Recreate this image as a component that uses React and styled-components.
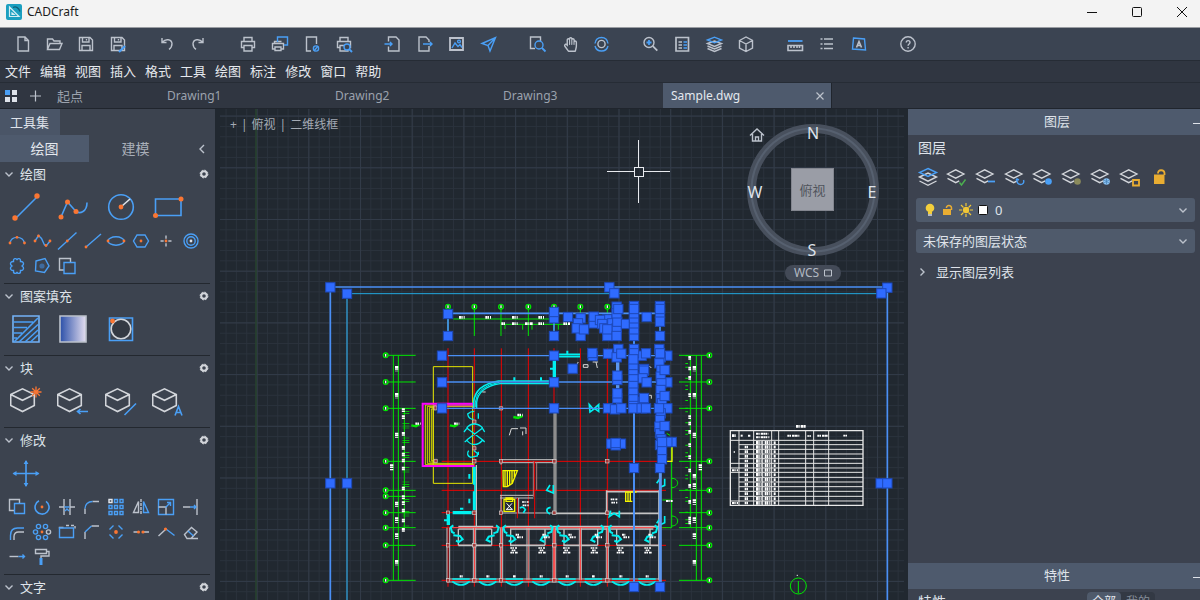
import styled, { createGlobalStyle } from "styled-components";
import { FaRegHandPaper } from "react-icons/fa";

const GlobalStyle = createGlobalStyle`
  * {
    box-sizing: border-box;
  }
  body {
    margin: 0;
    overflow: hidden;
    font-family: "Noto Sans", "Noto Sans CJK SC", sans-serif;
    font-size: 13px;
    line-height: 20px;
    color: #dfe3ea;
    background: #212830;
  }
  button,
  select {
    font: inherit;
    color: inherit;
    border: 0;
    padding: 0;
    background: none;
  }
  svg {
    display: block;
    flex: none;
  }
`;

const GREY = "#bcc2cc";
const BLUE = "#4a9ff5";
const ORANGE = "#fa7633";
const GOLD = "#e9ad32";

/* ---------- window ---------- */

const Window = styled.div`
  display: flex;
  flex-direction: column;
  height: 100vh;
  overflow: hidden;
`;
const TitleBar = styled.header`
  display: flex;
  align-items: center;
  flex: none;
  height: 28px;
  padding: 0 0 3px 6px;
  gap: 5px;
  color: #1c1c1c;
  background: #f3f3f3;
  border-bottom: 1px solid #9a9da2;
  font-size: 12px;
`;
const AppName = styled.span`
  flex: 1;
`;
const WindowControls = styled.div`
  display: flex;
  gap: 9px;
`;
const WindowButton = styled.button`
  display: flex;
  align-items: center;
  justify-content: center;
  width: 36px;
  height: 24px;
`;
const Toolbar = styled.div`
  display: flex;
  align-items: center;
  flex: none;
  gap: 17px;
  height: 33px;
  padding: 0 6px;
  background: #3b4452;
  border-bottom: 1px solid #262c35;
`;
const ToolGroup = styled.div`
  display: flex;
`;
const ToolButton = styled.button`
  display: flex;
  align-items: center;
  justify-content: center;
  width: 32px;
  height: 32px;
  color: ${GREY};
`;
const MenuBar = styled.nav`
  display: flex;
  align-items: center;
  flex: none;
  height: 22px;
  padding: 0 1px 2px;
  background: #303641;
  border-bottom: 1px solid #262c35;
`;
const MenuLink = styled.a`
  padding: 0 4px;
  color: #e6e9ee;
  text-decoration: none;

  &:not(:last-child) {
    margin-right: 1px;
  }
`;
const TabBar = styled.div`
  display: flex;
  align-items: stretch;
  flex: none;
  height: 26px;
  background: #303641;
  border-bottom: 1px solid #20252d;
`;
const TabBarButton = styled.button`
  display: flex;
  align-items: center;
  justify-content: center;
  width: ${(props) => props.$width}px;
`;
const FileTab = styled.div`
  display: flex;
  align-items: center;
  justify-content: space-between;
  width: ${(props) => props.$width || 168}px;
  padding: 0 6px 0 8px;
  font-size: 12px;
  color: ${(props) => (props.$active ? "#e4e8ee" : "#9ba2ad")};
  background: ${(props) => (props.$active ? "#4e5a6d" : "none")};
  border-right: 1px solid ${(props) => (props.$active ? "#20252d" : "transparent")};
`;
const FileTabButton = styled.button`
  font-size: ${(props) => props.$size || 12}px;
`;
const Workspace = styled.main`
  display: flex;
  flex: 1;
  min-height: 0;
`;

/* ---------- tool sets panel ---------- */

const ToolPanel = styled.aside`
  flex: none;
  width: 215px;
  overflow: hidden;
  background: #3c434f;
`;
const PanelTitle = styled.div`
  width: 60px;
  height: 26px;
  padding: 3px 10px;
  white-space: nowrap;
  background: #4a5567;
`;
const ModeTabs = styled.div`
  display: flex;
  height: 27px;
`;
const ModeTab = styled.button`
  width: ${(props) => (props.$active ? 89 : 93)}px;
  font-size: 14px;
  color: ${(props) => (props.$active ? "#e4e8ee" : "#a9afb9")};
  background: ${(props) => (props.$active ? "#4e5a6d" : "none")};
`;
const CollapseButton = styled.button`
  display: flex;
  align-items: center;
  justify-content: center;
  flex: 1;
  padding-right: 6px;
  padding-left: 12px;
`;
const Section = styled.section`
  padding-bottom: 5px;
  border-bottom: 1px solid #23282f;
  margin: 0 5px 0 4px;
`;
const SectionHeader = styled.div`
  display: flex;
  align-items: center;
  height: 23px;
  padding-right: 1px;
`;
const SectionToggle = styled.button`
  display: flex;
  align-items: center;
  flex: 1;
  gap: 6px;
`;
const LargeTools = styled.div`
  display: grid;
  grid-template-columns: repeat(4, 1fr);
  grid-auto-rows: 43px;
  margin: 0 18px 0 -2px;
`;
const SmallTools = styled.div`
  display: grid;
  grid-template-columns: repeat(8, 1fr);
  grid-auto-rows: 25px;
  margin: 0 7px 0 1px;
`;
const GridButton = styled.button`
  display: flex;
  align-items: center;
  justify-content: center;
  min-width: 0;
`;

/* ---------- canvas ---------- */

const Canvas = styled.section`
  position: relative;
  flex: 1;
  min-width: 0;
  overflow: hidden;
  background: #212830;
`;
const ViewControls = styled.div`
  position: absolute;
  top: 6px;
  left: 15px;
  display: flex;
  gap: 4px;
  font-size: 12px;
  color: #a4aab4;
`;
const ViewCube = styled.div`
  position: absolute;
  top: 15px;
  right: 28px;
  width: 134px;
  display: flex;
  flex-direction: column;
  align-items: center;
  gap: 2px;
`;
const HomeButton = styled.button`
  position: absolute;
  top: 3px;
  left: 3px;
`;
const CubeFace = styled.button`
  position: absolute;
  top: 44px;
  left: 45px;
  width: 43px;
  height: 43px;
  color: #50545c;
  background: #9a9da6;
  outline: 1px solid #83868f;
  outline-offset: -1px;
`;
const WcsButton = styled.button`
  display: flex;
  align-items: center;
  justify-content: center;
  gap: 5px;
  width: 56px;
  height: 16px;
  border-radius: 8px;
  font-size: 12px;
  line-height: 16px;
  color: #b2b8c2;
  background: #434a57;
`;

/* ---------- layer panel ---------- */

const SidePanel = styled.aside`
  display: flex;
  flex-direction: column;
  flex: none;
  width: 292px;
  overflow: hidden;
  background: #3c424f;
`;
const SideHeader = styled.div`
  display: flex;
  align-items: center;
  flex: none;
  height: 26px;
  padding-left: 13px;
  background: #4e5a6d;
`;
const SideTitle = styled.h2`
  flex: 1;
  margin: 0;
  padding-bottom: 2px;
  text-align: center;
  font-size: 13px;
  font-weight: 400;
`;
const LayerBody = styled.div`
  flex: 1;
  padding: 3px 5px 0 8px;
`;
const SideSubtitle = styled.h3`
  margin: 0;
  padding-left: 2px;
  font-size: 14px;
  font-weight: 400;
`;
const LayerTools = styled.div`
  display: grid;
  grid-template-columns: repeat(9, 1fr);
  height: 32px;
  margin: 3px 22px 0 -2px;
`;
const Field = styled.label`
  display: flex;
  align-items: center;
  gap: 4px;
  height: 24px;
  margin-top: ${(props) => props.$top}px;
  padding: 0 7px;
  border-radius: 3px;
  background: #4f5a6b;
`;
const FieldSelect = styled.select`
  flex: 1;
  appearance: none;
  outline: none;
  padding-left: ${(props) => props.$indent || 0}px;
`;
const Disclosure = styled.button`
  display: flex;
  align-items: center;
  gap: 9px;
  margin-top: 9px;
  padding-left: 1px;
`;
const PropertiesRow = styled.div`
  display: flex;
  align-items: flex-start;
  justify-content: space-between;
  flex: none;
  height: 11px;
  padding: 3px 45px 0 10px;
  font-size: 14px;
`;
const Segmented = styled.div`
  display: flex;
  border-radius: 4px;
  background: #333944;
`;
const Segment = styled.button`
  width: 34px;
  height: 20px;
  border-radius: 4px;
  font-size: 12px;
  color: ${(props) => (props.$active ? "#e4e8ee" : "#858c98")};
  background: ${(props) => (props.$active ? "#4f5a6b" : "none")};
`;

/* ---------- icons ---------- */

function Icon({ size = 20, box = size, children }) {
  return (
    <svg
      width={size}
      height={size}
      viewBox={`0 0 ${box} ${box}`}
      fill="none"
      stroke={GREY}
      strokeWidth="1.4"
      aria-hidden="true"
    >
      {children}
    </svg>
  );
}

const Dot = ({ x, y, r = 1.4, fill = ORANGE }) => (
  <circle cx={x} cy={y} r={r} fill={fill} stroke="none" />
);

const printer = (
  <>
    <path d="M6 7V3.500h8V7M6 13.500H3.500V7.500h13v6H14" />
    <path d="M6 11.500h8v5.500H6z" />
  </>
);
const floppy = (
  <path d="M3.500 3.500h10.500l2.500 2.500v10.500h-13zM6.500 3.500V8h6.500V3.500M6 16.500V11.500h8v5M10.500 5v1.500" />
);

const TOOLBAR = [
  [
    ["新建", <path d="M6 3h7l3.500 3.500V17H6zM13 3v3.500h3.500" />],
    ["打开", <path d="M3.500 15.500V5h5l1.500 2h6v2.500M3.500 15.500l2.500-6H18l-2.500 6z" />],
    ["保存", floppy],
    [
      "另存为",
      <>
        {floppy}
        <path d="M11 18l6-6" stroke={BLUE} strokeWidth="2.200" />
      </>,
    ],
  ],
  [
    ["撤销", <path d="M5 4v4.500h4.500M5.500 8c3-3.500 9-3 9.500 1.500 0 2.500-1 4.500-3 5.800" />],
    ["重做", <path d="M14 4v4.500H9.500M13.500 8c-3-3.500-9-3-9.500 1.500 0 2.500 1 4.500 3 5.800" />],
  ],
  [
    ["打印", printer],
    [
      "批量打印",
      <>
        <path d="M4.500 9.500V7.500h7M5 15H2.500v-5.500h11V15h-3M5 13h6v3.500H5z" />
        <path d="M7.500 8V3h10v8h-3.500" stroke={BLUE} />
      </>,
    ],
    [
      "页面设置",
      <>
        <path d="M9 17H4.500V3h10v7" />
        <circle cx="14" cy="14.500" r="2.600" stroke={BLUE} />
        <path d="M12 17l4-5" stroke={BLUE} />
      </>,
    ],
    [
      "打印预览",
      <>
        {printer}
        <circle cx="13" cy="13" r="3" fill="#3b4452" stroke={BLUE} />
        <path d="M15 15l3 3" stroke={BLUE} strokeWidth="2" />
      </>,
    ],
  ],
  [
    [
      "输入",
      <>
        <path d="M5.500 7.500V3h7.500l3 3v11H5.500v-4.500" />
        <path d="M1.500 10h7.500M7 8l2 2-2 2" stroke={BLUE} />
      </>,
    ],
    [
      "输出",
      <>
        <path d="M14 8V6l-3-3H4v14h10v-5" />
        <path d="M8 10h9M15 8l2 2-2 2" stroke={BLUE} />
      </>,
    ],
    [
      "图像",
      <>
        <path d="M3 4h13v12H3z" strokeWidth="1.800" />
        <path d="M5 14l3-5 3 3.500 2-2 2 3" stroke={BLUE} />
        <circle cx="12" cy="7.500" r="1.400" stroke={BLUE} />
      </>,
    ],
    [
      "发送",
      <path d="M3 9.500L16.500 3.500 11 17 9 11.500zM9 11.500l7.500-8" stroke={BLUE} />,
    ],
  ],
  [
    [
      "窗口缩放",
      <>
        <path d="M7 14.500H2.500V3h10v4" />
        <circle cx="11" cy="11" r="4" stroke={BLUE} />
        <path d="M14 14l3.500 3.500" stroke={BLUE} strokeWidth="1.800" />
      </>,
    ],
    ["平移", null],
    [
      "动态观察",
      <>
        <circle cx="9.500" cy="10" r="3.600" />
        <path
          d="M3 9.500c.5-3.500 3-6 6.500-6s6 2.500 6.500 6M3 12c.8 3 3.200 5 6.500 5s5.700-2 6.500-5"
          stroke={BLUE}
        />
      </>,
    ],
  ],
  [
    [
      "放大",
      <>
        <circle cx="8" cy="8.500" r="5" />
        <path d="M11.800 12.200l4.500 4.500" strokeWidth="1.800" />
        <path d="M5.500 8.500h5M8 6v5" stroke={BLUE} strokeWidth="1.800" />
      </>,
    ],
    [
      "属性",
      <>
        <path d="M3 3.500h12.500v13.500H3z" strokeWidth="1.700" />
        <path d="M5.500 8h3.500M5.500 11h3.500M5.500 14h3.500" />
        <path d="M10.500 8h3.500M10.500 11h3.500M10.500 14h3.500" stroke={BLUE} />
      </>,
    ],
    [
      "图层",
      <>
        <path d="M2.500 9.500l7-2.500 7 2.500-7 3zM2.500 12l7 3 7-3M2.500 14.500l7 3 7-3" />
        <path d="M2.500 6l7-2.800 7 2.800-7 2.800z" stroke={BLUE} />
      </>,
    ],
    ["块", <path d="M2.500 6.500L9 3l6.500 3.500v7.500L9 17.500 2.500 14zM2.500 6.500L9 10l6.500-3.500M9 10v7.500" />],
  ],
  [
    [
      "测量",
      <>
        <path d="M2 7h14.500" stroke={BLUE} strokeWidth="1.800" />
        <path d="M2 16.500v-5h14.500v5z M5 11.500v2.500M8 11.500v2.500M11 11.500v2.500M13.500 11.500v2.500" strokeWidth="1.600" />
      </>,
    ],
    ["列表", <path d="M2.500 5h2M2.500 10h2M2.500 14.500h2M6 5h9M6 10h9M6 14.500h9" strokeWidth="1.700" />],
    [
      "文字",
      <>
        <path d="M3.500 4l11 1 1 11-13-1z" stroke={BLUE} />
        <path d="M6.500 13.500l2.500-6 2.500 6M7.500 11.500h3" strokeWidth="1.600" />
      </>,
    ],
  ],
  [
    [
      "帮助",
      <>
        <circle cx="9" cy="10" r="7.200" />
        <path d="M7.300 8.500c0-2.500 3.700-2.500 3.700 0 0 1.500-1.900 1.400-1.900 3.200M9.100 13v1.500" />
      </>,
    ],
  ],
];

const DRAW_LARGE = [
  [
    "直线",
    <>
      <path d="M6 27L27 6" stroke={BLUE} />
      <Dot x={5} y={27} r={2.700} />
      <Dot x={27} y={5} r={2.700} />
    </>,
  ],
  [
    "多段线",
    <>
      <path d="M4 26l6.500-15 8.500 9.500c4 2.500 11 .5 11-9" stroke={BLUE} />
      <Dot x={4} y={26} r={2.500} />
      <Dot x={10.500} y={11} r={2.500} />
      <Dot x={19} y={20.500} r={2.500} />
    </>,
  ],
  [
    "圆",
    <>
      <circle cx="16" cy="16" r="12.300" stroke={BLUE} />
      <path d="M17 15l8-7" stroke="#dfe3ea" />
      <Dot x={16} y={16} r={2.400} />
    </>,
  ],
  [
    "矩形",
    <>
      <path d="M3.500 8h25.500v16.500h-25.500z" stroke={BLUE} />
      <Dot x={3.500} y={24.500} r={2.500} />
      <Dot x={29} y={8} r={2.500} />
    </>,
  ],
];

const DRAW_SMALL = [
  [
    "圆弧",
    <>
      <path d="M3 12c1.500-7.500 12.500-7.500 14.500 0" stroke={BLUE} />
      <Dot x={3} y={12} />
      <Dot x={10} y={6.300} />
      <Dot x={17.500} y={12} />
    </>,
  ],
  [
    "样条曲线",
    <>
      <path d="M3 10l3.500-5.500 3 3 3 6.500 2 .500 3.500-4.500" stroke={BLUE} />
      <Dot x={3} y={10} />
      <Dot x={6.500} y={5} />
      <Dot x={14} y={14.500} />
      <Dot x={18} y={10} />
    </>,
  ],
  [
    "构造线",
    <>
      <path d="M1 18.500L19.500 1.500" stroke={BLUE} />
      <Dot x={10.300} y={10} />
    </>,
  ],
  [
    "射线",
    <>
      <path d="M4 16L19 3" stroke={BLUE} />
      <Dot x={4} y={16} />
    </>,
  ],
  [
    "椭圆",
    <>
      <ellipse cx="10" cy="10" rx="8" ry="4.200" stroke={BLUE} />
      <Dot x={2} y={10} />
      <Dot x={18} y={10} />
    </>,
  ],
  [
    "多边形",
    <>
      <path d="M6 4h8l3.500 6-3.500 6H6l-3.500-6z" stroke={BLUE} />
      <Dot x={10} y={10} />
    </>,
  ],
  [
    "点",
    <>
      <path d="M10 4.500v3.200M10 12.300v3.200M4.500 10h3.200M12.300 10h3.200" />
      <Dot x={10} y={10} />
    </>,
  ],
  [
    "圆环",
    <>
      <circle cx="10" cy="10" r="7" stroke={BLUE} />
      <circle cx="10" cy="10" r="4.200" stroke={BLUE} />
      <Dot x={10} y={10} fill="#dfe3ea" />
    </>,
  ],
  [
    "修订云线",
    <path
      d="M6.500 5.500c-.5-3.500 3-3.500 3.500-1.500.5-2 4-2 3.500 1.500 3.500 0 4 3 1.500 4.500 2.500 1.500 2 4.500-1.500 4.500.5 3.500-3 3.500-3.500 1.500-.5 2-4 2-3.500-1.500-3.500 0-4-3-1.500-4.500-2.500-1.500-2-4.500 1.500-4.500z"
      stroke={BLUE}
    />,
  ],
  [
    "面域",
    <>
      <path d="M4 5l9-2.500 4 7.500-4.500 6.500-9-1.500z" stroke={BLUE} />
      <circle cx="10" cy="10" r="2.600" fill="#3f6b9e" stroke="none" />
    </>,
  ],
  [
    "擦除",
    <>
      <path d="M7 14H2.500V2.500h11V6" />
      <path d="M7 6.500h11v11H7z" stroke={BLUE} />
    </>,
  ],
];

const HATCH = [
  [
    "图案填充",
    <>
      <path d="M3 3h26v26H3z" stroke="#74b3f7" />
      <path
        d="M4 9h19M4 14.500h13M4 20h8M4 25h3M4 29L28 5M9 29L28 11.500M15 29l13-12M20.500 29l7.500-7"
        stroke={BLUE}
      />
    </>,
  ],
  [
    "渐变色",
    <>
      <defs>
        <linearGradient id="gradient-fill">
          <stop offset="0" stopColor="#2b4fa8" />
          <stop offset="1" stopColor="#e4def0" />
        </linearGradient>
      </defs>
      <path d="M3 3h26v26H3z" fill="url(#gradient-fill)" />
    </>,
  ],
  [
    "边界",
    <>
      <path d="M4.500 5h23v22.500h-23z" stroke={BLUE} />
      <circle cx="16" cy="16" r="9.800" stroke="#d3d6db" fill="#333943" />
      <Dot x={7.500} y={8} r={2.400} />
    </>,
  ],
];

const cube = <path d="M0.700 9.500L12.500 3.800 24.300 9.500v11L12.500 26.500 0.700 20.500zM0.700 9.500l11.800 5.800L24.300 9.500" stroke="#d3d6db" />;

const BLOCKS = [
  [
    "创建块",
    <>
      {cube}
      <path d="M26 1.500v11M20.500 7h11M22.200 3.200l7.600 7.600M29.800 3.200l-7.600 7.600" stroke={ORANGE} strokeWidth="1.300" />
    </>,
  ],
  [
    "插入块",
    <>
      {cube}
      <path d="M31 26.500H20M23.500 24l-3 2.500 3 2.500" stroke={BLUE} />
    </>,
  ],
  [
    "编辑块",
    <>
      {cube}
      <path d="M19.500 30L31 18.500" stroke={BLUE} />
    </>,
  ],
  [
    "块属性",
    <>
      {cube}
      <path d="M23 30.500l3.500-9 3.500 9M24.300 27.500h4.500" stroke={BLUE} />
    </>,
  ],
];

const MOVE = [
  [
    "移动",
    <>
      <path d="M16 4v25M3.500 16.500h25" stroke={BLUE} />
      <path
        d="M16 3l2.400 4h-4.800zM16 30l2.400-4h-4.800zM2.500 16.500l4-2.400v4.800zM29.500 16.500l-4-2.400v4.800z"
        fill={BLUE}
        stroke="none"
      />
    </>,
  ],
];

const MODIFY = [
  [
    "复制",
    <>
      <path d="M7.500 13.500H2.500v-11h10v4" />
      <path d="M7.500 6.500h10v10h-10z" stroke={BLUE} />
    </>,
  ],
  [
    "旋转",
    <>
      <path d="M7 3.800A7 7 0 1 0 14 4.300" stroke={BLUE} strokeWidth="1.600" />
      <Dot x={10} y={10} />
    </>,
  ],
  [
    "修剪",
    <>
      <path d="M7 2v16M13 2v16M2 10h5M13 10h5" />
      <path d="M7.500 10h5M8 14l2-2 2 2" stroke={BLUE} />
    </>,
  ],
  [
    "圆角",
    <>
      <path d="M3 17V11.500M10.500 4.500h6.500" />
      <path d="M3 11.500c0-4 3-7 7.500-7" stroke={BLUE} />
    </>,
  ],
  [
    "阵列",
    <>
      <path d="M8.500 2.500h3v3h-3zM14 2.500h3v3h-3zM3 8.500h3v3H3zM8.500 8.500h3v3h-3zM14 8.500h3v3h-3zM3 14.500h3v3H3zM8.500 14.500h3v3h-3zM14 14.500h3v3h-3z" stroke={BLUE} />
      <path d="M3 2.500h3v3H3z" stroke="#e4e8ee" />
    </>,
  ],
  [
    "镜像",
    <>
      <path d="M7.500 4.500v11H2.500z" />
      <path d="M10 2v16" strokeDasharray="3 1" />
      <path d="M12.500 4.500v11H17.500z" stroke={BLUE} />
    </>,
  ],
  [
    "缩放",
    <>
      <path d="M2.500 2.500h15v15h-15z" stroke={BLUE} />
      <path d="M2.500 10h7.500v7.500" />
      <path d="M9.500 10.500l5-5M11 5.500h3.500V9" stroke={BLUE} />
    </>,
  ],
  [
    "延伸",
    <>
      <path d="M2 10h7M16 2v16" />
      <path d="M9 10h6M13 8l2 2-2 2" stroke={BLUE} />
    </>,
  ],
  [
    "偏移",
    <>
      <path d="M3.500 18v-4.500c0-5 3-7.500 7-7.500H17" stroke={BLUE} />
      <path d="M7 18v-3.500c0-3 2-4.500 4.500-4.500H17" />
    </>,
  ],
  [
    "环形阵列",
    <>
      <g stroke={BLUE}>
        <circle cx="6.500" cy="4.500" r="2.100" />
        <circle cx="13.500" cy="4.500" r="2.100" />
        <circle cx="3.500" cy="10" r="2.100" />
        <circle cx="6.500" cy="15.500" r="2.100" />
        <circle cx="13.500" cy="15.500" r="2.100" />
      </g>
      <circle cx="16.500" cy="10" r="2.100" />
      <Dot x={10} y={10} />
    </>,
  ],
  [
    "拉伸",
    <>
      <path d="M9 3.500h3M14 3.500h4v3" strokeDasharray="3 1.500" />
      <path d="M2.500 6.500V5.500h4" />
      <path d="M2.500 6h14v9.500h-14z" stroke={BLUE} />
    </>,
  ],
  [
    "倒角",
    <>
      <path d="M3 17V10M9.500 4H17" />
      <path d="M3 10l6.500-6" stroke={BLUE} />
    </>,
  ],
  [
    "分解",
    <>
      <path d="M7.500 3.500l-4 4M12.500 3.500l4 4M3.500 12.500l4 4M16.500 12.500l-4 4" stroke={BLUE} />
      <Dot x={10} y={10} r={1.900} />
    </>,
  ],
  [
    "打断",
    <>
      <path d="M2.500 10h5M12 10h6" />
      <Dot x={7.500} y={10} r={1.600} />
      <Dot x={12} y={10} r={1.600} />
    </>,
  ],
  [
    "合并",
    <>
      <path d="M2.500 14L10 7" />
      <path d="M10 7l8.500 6.500" stroke={BLUE} />
      <Dot x={9.500} y={7} r={1.600} />
    </>,
  ],
  [
    "删除",
    <>
      <path d="M3.500 12.500L10.500 5.500l5.500 4.500-6 6.500H6zM10 16.500h7" />
      <path d="M7 9l5.500 5" stroke={BLUE} />
    </>,
  ],
  [
    "拉长",
    <>
      <path d="M2.500 9.500h9" />
      <path d="M11.500 9.500h6M15.500 7.500l2 2-2 2" stroke={BLUE} />
    </>,
  ],
  [
    "特性匹配",
    <>
      <path d="M3.500 2.500h11v4h-11zM14.500 4.500h2.500v4.500H9v2" />
      <path d="M9 11v7" stroke={BLUE} strokeWidth="3" />
    </>,
  ],
];

const sheet = <path d="M2.500 9l8.200-4.200L18.900 9l-8.200 4.200zM2.500 13.300l8.200 4.300 3.500-1.800" stroke="#d3d6db" />;

const LAYER_TOOLS = [
  [
    "图层特性",
    <>
      <path d="M3.500 12l8.500-4 8.500 4-8.500 4.200zM3.500 16l8.500 4.300 8.500-4.300" stroke="#d3d6db" />
      <path d="M12 3.500l8.500 4-8.500 4-8.500-4z" stroke={BLUE} />
    </>,
  ],
  [
    "置为当前",
    <>
      {sheet}
      <path d="M14.500 17.500l2 2.500 4-5.500" stroke="#4cb050" />
    </>,
  ],
  [
    "匹配图层",
    <>
      {sheet}
      <path d="M14 16.500h7" stroke={BLUE} strokeWidth="1.800" />
    </>,
  ],
  [
    "上一个图层",
    <>
      {sheet}
      <path d="M14 14.500c-.5 3.500 1.500 5 3.500 5s4-1.500 3-4.500M13 15.500l1-1.500 2 1" stroke={BLUE} />
    </>,
  ],
  [
    "隔离图层",
    <>
      {sheet}
      <Dot x={17.500} y={16.500} r={3.300} fill={BLUE} />
    </>,
  ],
  [
    "关闭图层",
    <>
      {sheet}
      <Dot x={17.500} y={16.500} r={3.300} fill="#8a8a5c" />
    </>,
  ],
  [
    "冻结图层",
    <>
      {sheet}
      <Dot x={17.500} y={16.500} r={3.300} fill="#8cc4f5" />
      <path d="M17.500 13.500v6M15 15l5 3M20 15l-5 3" stroke="#4a84b8" strokeWidth="0.800" />
    </>,
  ],
  [
    "锁定图层",
    <>
      {sheet}
      <path d="M15 15h6v5.500h-6z" stroke={GOLD} strokeWidth="1.800" />
    </>,
  ],
  [
    "解锁图层",
    <>
      <path d="M7 9.500h10.500v9.500H7z" fill={GOLD} stroke="none" />
      <path d="M11 8.500c-.5-4 6-4.500 6.500-.5v2" stroke={GOLD} strokeWidth="1.800" />
    </>,
  ],
];

const Chevron = ({ dir = "down" }) => {
  const shapes = {
    down: "M1.500 3.500L5 7l3.500-3.500",
    right: "M3.500 1.500L7 5l-3.500 3.500",
    left: "M7 1l-4 4 4 4",
  };
  return (
    <Icon size={10}>
      <path d={shapes[dir]} />
    </Icon>
  );
};

const Gear = () => (
  <Icon size={10}>
    <circle cx="5" cy="5" r="2.800" stroke="#d3d6db" strokeWidth="2" />
    <circle cx="5" cy="5" r="3.900" stroke="#d3d6db" strokeWidth="1" strokeDasharray="1.800 1.260" />
  </Icon>
);

/* ---------- drawing ---------- */

const PITCH = 51.7;

const GridLines = () => (
  <>
    <defs>
      <pattern id="minor" x="256.600" y="115.600" width={PITCH / 5} height={PITCH / 5} patternUnits="userSpaceOnUse">
        <path d="M0 0V11M0 0H11" stroke="#2a323c" strokeWidth="1.800" fill="none" />
      </pattern>
      <pattern id="major" x="256.600" y="115.600" width={PITCH} height={PITCH} patternUnits="userSpaceOnUse">
        <path d="M0 0V52M0 0H52" stroke="#323b48" strokeWidth="2" fill="none" />
      </pattern>
    </defs>
    <rect x="220" y="109" width="684" height="491" fill="url(#minor)" />
    <rect x="220" y="109" width="684" height="491" fill="url(#major)" />
    <path d="M256 109v491" stroke="#27432e" strokeWidth="1.500" />
  </>
);

// row of illegible annotation marks
const Specks = ({ x, y, w, h = 8, vertical }) => (
  <path
    d={vertical ? `M${x} ${y}v${w}` : `M${x} ${y}h${w}`}
    stroke="#fff"
    strokeWidth={h}
    strokeDasharray="6 1 4 3 8 1"
  />
);

const AXIS_ROWS = [256, 336, 415, 574, 661, 728, 773, 826, 931];
const AXIS_COLS = [384, 463, 543, 625, 702, 781, 862];
const BAYS = [423, 503, 583, 663, 741, 820, 902, 981];

// selection grips, three units to a pixel
const GRIPS = [
  [31, 52], [81, 71], [868, 52], [883, 70], [1702, 53], [1684, 70],
  [31, 640], [81, 640], [1682, 640], [1702, 640],
  [384, 132], [384, 198], [366, 257], [366, 337], [366, 415],
  [702, 145], [702, 126], [702, 198], [744, 141], [782, 145], [774, 160],
  [782, 198], [770, 175], [792, 178], [821, 160], [821, 140], [862, 148],
  [840, 150], [847, 162], [862, 198], [853, 175], [877, 160], [890, 175],
  [862, 178], [892, 155], [890, 198], [918, 162], [890, 110], [890, 130], [895, 117],
  [942, 198], [942, 178], [942, 160], [942, 145], [942, 130], [942, 108], [942, 117],
  [980, 141], [1020, 108], [1020, 130], [1020, 117], [1020, 155], [1020, 198],
  [702, 257], [818, 258], [817, 249], [864, 251], [895, 237], [890, 262], [904, 251],
  [942, 237], [965, 257], [978, 250], [1018, 237], [1042, 257],
  [758, 296], [892, 330], [892, 317], [702, 337], [892, 385], [892, 370],
  [972, 297], [972, 302], [968, 325], [980, 337], [968, 395], [972, 384],
  [942, 250], [940, 400], [940, 380], [940, 360], [940, 340], [940, 320], [940, 300], [940, 285], [940, 268],
  [1042, 337], [1022, 262], [1018, 280], [1024, 300], [1022, 320], [1024, 340], [1022, 360], [1022, 385],
  [1026, 400], [1020, 250], [1034, 300], [1034, 378],
  [702, 415], [864, 415], [885, 418], [904, 415], [940, 415], [965, 415], [978, 415], [1042, 415],
  [1022, 430], [1020, 450], [1018, 470], [1020, 490], [1024, 508], [1020, 525], [1017, 415], [1034, 468],
  [1055, 516], [1042, 516], [1026, 540], [1026, 516], [1026, 568], [1020, 594],
  [874, 521], [903, 521], [887, 526], [887, 519], [942, 594], [942, 951], [1020, 951],
];

function AxisRows({ from, to, bubble, rows }) {
  return rows.map((y) => (
    <g key={y}>
      <path d={`M${from} ${y}H${to}`} />
      <circle cx={bubble} cy={y} r="7" strokeWidth="4" />
      <path d={`M${bubble} ${y - 4}v8`} stroke="#fff" strokeWidth="4" />
    </g>
  ));
}

function FloorPlan() {
  return (
    <g transform="translate(320 270) scale(0.333333)" fill="none" strokeWidth="3">
      {/* sheet frame */}
      <path d="M31 990V51H1702V990" stroke="#4a8ff5" strokeWidth="5" />
      <path d="M81 71H1684" stroke="#22a9e0" />
      <path d="M81 71V990" stroke="#2f86b4" strokeWidth="5" />

      {/* column and row axes */}
      <g stroke="#f00000" strokeWidth="3">
        <path d="M463 235V950M544 235V950M625 235V950M781 235V950M862 235V950" />
        <path d="M384 235V950" stroke="#a01015" strokeWidth="5" />
        <path d="M702 235V415" stroke="#a01015" strokeWidth="5" />
        <path d="M365 574H1020M365 661H1038M365 728H470M365 773H1038M365 826H1038M365 931H1038" />
      </g>

      {/* dimensions */}
      <g stroke="#00e800">
        <path d="M220 256V931M235 256V931M253 415V773" />
        <path d="M253 415V773M262 415V773" strokeWidth="12" strokeDasharray="2 6 2 4 2 28" />
        <AxisRows from={204} to={287} bubble={197} rows={[...AXIS_ROWS, 679]} />
        <path d="M1111 256V773M1129 256V931M1144 256V931" />
        <path d="M1100 256V773" strokeWidth="8" strokeDasharray="3 20 3 8 3 30" />
        <AxisRows from={1077} to={1162} bubble={1168} rows={AXIS_ROWS} />
        {AXIS_COLS.map((x) => (
          <g key={x}>
            <circle cx={x} cy="110" r="7" strokeWidth="4" />
            <path d={`M${x} 117V198`} />
            <path d={`M${x} 106v8`} stroke="#fff" strokeWidth="4" />
          </g>
        ))}
        <path d="M400 147H702M544 163H750M555 163v14M608 163v16M636 163v16M715 163v16" />
        <path d="M1055 530V773M1055 625c24 0 24 28 0 28M1055 738c24 0 24 30 0 30M1027 773h28M1027 690h28M1040 490l10 6" />
        <path d="M274 466l14 3 10-6M390 466l14 3 10-6M580 441l14 3 14-6" strokeWidth="7" />
      </g>
      <Specks x={417} y={142} w={17} />
      <Specks x={496} y={142} w={17} />
      <Specks x={576} y={142} w={17} />
      <Specks x={655} y={142} w={17} />
      <Specks x={544} y={161} w={14} />
      <Specks x={576} y={161} w={17} />
      <Specks x={615} y={161} w={24} />
      <Specks x={655} y={161} w={17} />
      <Specks x={730} y={161} w={20} />
      {[288, 369, 488, 695, 742, 790, 870].map((y) => (
        <Specks key={y} vertical x={230} y={y} w={16} h={10} />
      ))}
      {[415, 436, 486, 528, 548, 566, 590, 650, 676, 694, 716, 746, 774].map((y) => (
        <Specks key={y} vertical x={250} y={y} w={13} h={9} />
      ))}
      <Specks vertical x={215} y={583} w={18} h={10} />
      {[288, 369, 488, 612, 640, 688, 742, 790, 870].map((y) => (
        <Specks key={y} vertical x={1123} y={y} w={16} h={10} />
      ))}
      {[258, 290, 318, 370, 436, 455, 480, 520, 556, 596, 642, 690, 740, 752].map((y) => (
        <Specks key={y} vertical x={1109} y={y} w={13} h={8} />
      ))}
      <Specks vertical x={1141} y={583} w={18} h={10} />
      <Specks x={286} y={461} w={16} h={7} />
      <Specks x={402} y={461} w={16} h={7} />
      <Specks x={592} y={435} w={16} h={7} />

      {/* terrace */}
      <path d="M340 290H458V640H340z" stroke="#e8e800" />
      <g stroke="#d8d800">
        <path d="M463 405H316V584H463M463 409H322V580H458M346 413H328V576H350M346 417H334V572H342" />
        <path d="M340 410V585" strokeWidth="4" />
      </g>
      <path d="M463 401H308V588H463" stroke="#f0f" strokeWidth="6" />
      <path d="M340 407H463" stroke="#f0f" strokeWidth="2" />

      {/* walls */}
      <g stroke="#c4c4c4">
        <path d="M705 415V728" strokeWidth="10" stroke="#8d8d8d" />
        <path d="M544 569H702M544 578H702M540 676H640M540 684H640M543 574V584M543 676V730M596 684V728M544 729H702" />
        <path d="M640 574V680M650 578V661" stroke="#b07878" />
        <path d="M469 585V773" strokeWidth="4" />
        <path d="M702 730H1020M860 661V728M862 665H1020" strokeWidth="5" />
        <path d="M415 770H520M555 770H1020M415 777H515M570 777H1000M415 826H515M570 826H675M730 826H833M890 826H1020" strokeWidth="5" />
        <path d="M415 777V826M515 777V826M572 777V826M675 777V826M732 777V826M833 777V826M890 777V826M990 777V826" strokeWidth="4" />
        <path d="M381 773V936M389 773V931M460 773V931M467 773V931M541 773V931M548 773V931M621 773V931M627 773V931M699 773V931M707 773V931M778 773V931M784 773V931M859 773V931M865 773V931M1016 661V931" />
        <path d="M381 927H1020M381 936H1020" />
      </g>
      <g stroke="#ff5050">
        <path d="M395 773H1000M464 773V931M544 773V931M702 773V931M781 773V931M862 773V931" />
        <path d="M703 773V931" strokeWidth="6" />
        <path d="M644 574V745M645 661H702M592 684V745" stroke="#f00000" />
        <path d="M384 931H1020" stroke="#f00000" strokeWidth="2" />
      </g>
      <g stroke="#d0d0d0" fill="#a03a3a" strokeWidth="2">
        {[384, 463, 543, 703, 862].flatMap((x) =>
          [574, 728, 826, 931].map((y) =>
            x === 384 && y === 574 ? null : <rect key={x + "-" + y} x={x - 5} y={y - 5} width="10" height="10" />
          )
        )}
        <path d="M458 450h10v10h-10zM458 530h10v10h-10zM538 410h10v10h-10zM342 408h8v12h-8zM342 568h10v10h-10z" />
      </g>

      {/* glazing, windows and doors */}
      <g stroke="#00f0f0">
        <path d="M461 415V395Q466 345 535 333H702" strokeWidth="5" />
        <path d="M470 415V397Q475 352 540 341H702" strokeWidth="4" />
        <path d="M466 412V396Q471 348 538 337" />
        <path d="M583 322v10M663 322v10M742 242v10M690 296h10" strokeWidth="6" />
        <path d="M702 253H780M702 260H780" strokeWidth="5" />
        <path d="M703 270V322" strokeWidth="10" />
        <path d="M461 590V644M461 664V720M465 590V720" strokeWidth="5" />
        <path d="M398 728H455M385 733V765" strokeWidth="10" />
        <path d="M448 612v14M448 686v14M420 716h10M372 751h10" strokeWidth="6" />
        <path
          d="M463 424c-8 0-16 4-20 8 2 12 10 16 18 16M475 430v16M440 474c12-16 34-16 48 0M440 510c12 18 34 18 48 0M488 474L440 510M440 474L488 510M432 486l8-10M494 486l-6-10M434 516l8-6M494 516l-6-6M446 542c-6 8-4 16 6 20l20-4v-8l-10-8M475 545v10"
          strokeWidth="4"
        />
        {[400, 528, 558, 690, 718, 842, 875, 1004].map((x, i) => (
          <path
            key={x}
            d={
              i % 2
                ? `M${x} 766l8 6-4 14-12 4M${x - 4} 796l-18 4-6 10 12 6`
                : `M${x} 766l-8 6 4 14 8 4M${x} 796l20 2 8 10-12 8-8-4`
            }
            strokeWidth="6"
          />
        ))}
        <path d="M690 645l-10 16 20 8V645M600 715c4-6 12-4 16 4l-6 10M692 712c-16 2-14 14-2 20M872 722l-4 18 14-10 16 10v-18M808 404l12 14 16-14v20l-12-8-14 10zM1010 640l10-14v26l14-6v-20M1010 760l10-14v18l14-6v-20" strokeWidth="5" />
        {BAYS.map((x) => (
          <path key={x} d={`M${x - 26} 927H${x + 26}M${x - 26} 934q26 22 52 0`} strokeWidth="5" />
        ))}
      </g>

      {/* stairs and lift */}
      <g stroke="#f5f500" strokeWidth="4">
        <path d="M549 602H592L577 640 562 650H550zM555 602V650M562 602V650M569 602V645M576 602V640M583 602V622" />
        <path d="M552 688H584V724H552zM558 684h20v10h-20z" />
        <path d="M915 666H950M917 664V694M924 664V694M931 664V694M915 694h22M1040 574h16V530" />
      </g>
      <path d="M560 700l16 18M576 700l-16 18M558 718h20" stroke="#fff" />

      {/* room labels */}
      {BAYS.map((x) => (
        <Specks key={x} x={x - 4} y={919} w={9} h={7} />
      ))}
      {BAYS.slice(2).map((x, i) => (
        <g key={x}>
          <Specks x={x - 12 + (i % 2) * 4} y={834} w={20} h={5} />
          <Specks x={x - 8 + (i % 2) * 4} y={841} w={14} h={5} />
          <Specks x={x - 12 + (i % 2) * 4} y={848} w={22} h={5} />
          <Specks x={x + 4} y={794} w={10} h={6} />
          <Specks x={x + 8} y={802} w={18} h={6} />
        </g>
      ))}
      <g stroke="#d9d9d9">
        <path d="M568 496l6-20h20M600 474h18v18M608 484v12M487 366h10M766 290c2-10 10-8 8-14M790 284h14v8h-14zM818 276h16M828 276l4 18M988 288l6 6M986 376h8v10" />
      </g>
      <Specks x={606} y={696} w={20} h={5} />
      <Specks x={608} y={706} w={18} h={5} />
      <Specks x={872} y={688} w={20} h={5} />
      <Specks x={874} y={698} w={18} h={5} />
      <Specks x={1038} y={693} w={20} h={6} />

      {/* selected objects */}
      <g stroke="#4a8ff5" strokeWidth="5">
        <path d="M384 130H1020" />
        <path d="M384 130V198M702 130V198M1020 117V198" />
        <path d="M384 257H702M820 257H1042" strokeWidth="4" />
        <path d="M366 336H1042" />
        <path d="M366 415H1042" strokeWidth="4" />
        <path d="M893 257V415" strokeWidth="10" stroke="#5c96ee" />
        <path d="M942 117V951" strokeWidth="6" />
        <path d="M1021 257V951" strokeWidth="9" stroke="#5c96ee" />
      </g>
      <g fill="#2f6bff" stroke="#1d48b8">
        {GRIPS.map(([x, y], i) => (
          <rect key={i} x={x - 14} y={y - 14} width="28" height="28" />
        ))}
      </g>

      {/* door and window schedule */}
      <g transform="translate(1140 390)" stroke="#e8e8e8">
        <path d="M91 92H489V316H91z" strokeWidth="4" />
        <path d="M117 92V316M161 92V316M188 121V316M215 92V316M236 92V316M317 92V316M341 92V316M386 92V316" />
        <path d="M91 121H489M91 190H489M91 204H489M91 217H489M91 303H489" />
        <path d="M117 134H489M117 148H489M117 162H489M117 176H489M117 232H489M117 246H489M117 260H489M117 274H489M117 289H489" />
        <Specks x={288} y={79} w={30} h={8} />
        <Specks x={96} y={107} w={12} h={8} />
        <Specks x={122} y={107} w={6} h={6} />
        <Specks x={144} y={107} w={8} h={6} />
        <Specks x={168} y={101} w={38} h={6} />
        <Specks x={168} y={112} w={40} h={6} />
        <Specks x={262} y={107} w={38} h={6} />
        <Specks x={322} y={108} w={12} h={5} />
        <Specks x={352} y={107} w={32} h={6} />
        <Specks x={430} y={107} w={14} h={5} />
        {[128, 141, 155, 169, 183, 197, 210, 224, 239, 253, 267, 281, 296, 309].map((y, i) => (
          <g key={y}>
            {i > 0 && <Specks x={134} y={y} w={10} h={8} />}
            <Specks x={168} y={y} w={17} h={10} />
            <Specks x={194} y={y} w={17} h={10} />
            <Specks x={221} y={y} w={6} h={8} />
          </g>
        ))}
        <Specks x={96} y={211} w={18} h={6} />
        <Specks x={96} y={309} w={18} h={6} />
        <Specks x={101} y={156} w={4} h={5} />
        <circle cx="295" cy="558" r="24" stroke="#00e800" />
        <path d="M295 543V580" stroke="#00e800" />
        <path d="M290 526h4" />
      </g>
    </g>
  );
}

const Drawing = () => (
  <svg
    width="100%"
    height="100%"
    viewBox="215 109 693 491"
    preserveAspectRatio="xMidYMid slice"
    role="img"
    aria-label="Sample.dwg"
  >
    <GridLines />
    <FloorPlan />
    <path
      d="M607 171.500H634M643 171.500H670M638.500 140V167M638.500 176V203M634 167h9v9h-9z"
      fill="none"
      stroke="#e8eaee"
      shapeRendering="crispEdges"
    />
  </svg>
);

const Compass = () => (
  <svg width="134" height="139" viewBox="0 0 134 139" fill="none" aria-hidden="true">
    <circle cx="67" cy="66" r="61.500" stroke="#48505d" strokeWidth="9" />
    <circle cx="67" cy="66" r="61.500" stroke="#56606f" strokeWidth="2" />
    <g fill="#dfe3ea" fontSize="16" textAnchor="middle">
      <text x="67" y="15">N</text>
      <text x="126" y="74">E</text>
      <text x="66" y="132">S</text>
      <text x="9" y="74">W</text>
    </g>
  </svg>
);

/* ---------- page ---------- */

const Tools = ({ items, size }) =>
  items.map(([name, art]) => (
    <GridButton key={name} aria-label={name}>
      <Icon size={size}>{size === 32 ? <g strokeWidth="1.600">{art}</g> : art}</Icon>
    </GridButton>
  ));

function ToolSection({ title, children }) {
  return (
    <Section>
      <SectionHeader>
        <SectionToggle>
          <Chevron />
          {title}
        </SectionToggle>
        <button aria-label={`${title}设置`}>
          <Gear />
        </button>
      </SectionHeader>
      {children}
    </Section>
  );
}

const MENUS = ["文件", "编辑", "视图", "插入", "格式", "工具", "绘图", "标注", "修改", "窗口", "帮助"];

function App() {
  return (
    <Window>
      <GlobalStyle />
      <TitleBar>
        <svg width="16" height="16" viewBox="0 0 16 16" fill="none" aria-hidden="true">
          <rect width="16" height="16" rx="2" fill="#1b9fc0" />
          <path d="M3.500 3v9.500H13zM6 9v1.500h2z" stroke="#d5eef4" strokeWidth="1.200" />
          <path d="M7 3.500c3-1.500 6 .5 7 4" stroke="#0f5f78" strokeWidth="1.200" />
        </svg>
        <AppName>CADCraft</AppName>
        <WindowControls>
          <WindowButton aria-label="最小化">
            <svg width="12" height="12" stroke="#111" fill="none">
              <path d="M1 6.500h10" />
            </svg>
          </WindowButton>
          <WindowButton aria-label="最大化">
            <svg width="12" height="12" stroke="#111" fill="none">
              <rect x="1.500" y="1.500" width="9" height="9" rx="1" />
            </svg>
          </WindowButton>
          <WindowButton aria-label="关闭">
            <svg width="12" height="12" stroke="#111" fill="none">
              <path d="M1 1l10 10M11 1L1 11" />
            </svg>
          </WindowButton>
        </WindowControls>
      </TitleBar>

      <Toolbar>
        {TOOLBAR.map((group, i) => (
          <ToolGroup key={i}>
            {group.map(([name, art]) => (
              <ToolButton key={name} aria-label={name}>
                {art ? <Icon>{art}</Icon> : <FaRegHandPaper size={15} />}
              </ToolButton>
            ))}
          </ToolGroup>
        ))}
      </Toolbar>

      <MenuBar>
        {MENUS.map((menu) => (
          <MenuLink key={menu} href="#">
            {menu}
          </MenuLink>
        ))}
      </MenuBar>

      <TabBar>
        <TabBarButton $width={22} aria-label="所有图纸">
          <svg width="12" height="12" fill="#dfe3ea">
            <rect width="5" height="5" fill={BLUE} />
            <rect x="7" width="5" height="5" />
            <rect y="7" width="5" height="5" />
            <rect x="7" y="7" width="5" height="5" />
          </svg>
        </TabBarButton>
        <TabBarButton $width={27} aria-label="新建图纸">
          <Icon size={12}>
            <path d="M5.500 .5v11M0 6h11" strokeWidth="1.200" />
          </Icon>
        </TabBarButton>
        <FileTab $width={110}>
          <FileTabButton $size={13}>起点</FileTabButton>
        </FileTab>
        {["Drawing1", "Drawing2", "Drawing3"].map((name) => (
          <FileTab key={name}>
            <FileTabButton>{name}</FileTabButton>
          </FileTab>
        ))}
        <FileTab $active $width={169}>
          <FileTabButton>Sample.dwg</FileTabButton>
          <button aria-label="关闭 Sample.dwg">
            <Icon size={10}>
              <path d="M1.500 1.500l7 7M8.500 1.500l-7 7" strokeWidth="1.200" />
            </Icon>
          </button>
        </FileTab>
      </TabBar>

      <Workspace>
        <ToolPanel>
          <PanelTitle>工具集</PanelTitle>
          <ModeTabs>
            <ModeTab $active>绘图</ModeTab>
            <ModeTab>建模</ModeTab>
            <CollapseButton aria-label="折叠">
              <Chevron dir="left" />
            </CollapseButton>
          </ModeTabs>
          <ToolSection title="绘图">
            <LargeTools>
              <Tools items={DRAW_LARGE} size={32} />
            </LargeTools>
            <SmallTools>
              <Tools items={DRAW_SMALL} size={20} />
            </SmallTools>
          </ToolSection>
          <ToolSection title="图案填充">
            <LargeTools>
              <Tools items={HATCH} size={32} />
            </LargeTools>
          </ToolSection>
          <ToolSection title="块">
            <LargeTools>
              <Tools items={BLOCKS} size={32} />
            </LargeTools>
          </ToolSection>
          <ToolSection title="修改">
            <LargeTools>
              <Tools items={MOVE} size={32} />
            </LargeTools>
            <SmallTools>
              <Tools items={MODIFY} size={20} />
            </SmallTools>
          </ToolSection>
          <ToolSection title="文字" />
        </ToolPanel>

        <Canvas>
          <Drawing />
          <ViewControls>
            <button>+</button>
            <span>|</span>
            <button>俯视</button>
            <span>|</span>
            <button>二维线框</button>
          </ViewControls>
          <ViewCube>
            <Compass />
            <HomeButton aria-label="主视图">
              <Icon size={16}>
                <path d="M1 8.500L8 2l7 6.500M3.500 7v7h9V7M6.500 14v-4h3v4" />
              </Icon>
            </HomeButton>
            <CubeFace>俯视</CubeFace>
            <WcsButton>
              WCS
              <Icon size={8}>
                <path d="M.5 1h7v6h-7z" strokeWidth="1" />
              </Icon>
            </WcsButton>
          </ViewCube>
        </Canvas>

        <SidePanel>
          <SideHeader>
            <SideTitle>图层</SideTitle>
            <button aria-label="折叠图层">
              <svg width="7" height="9" stroke="#dfe3ea">
                <path d="M0 5.500h7" />
              </svg>
            </button>
          </SideHeader>
          <LayerBody>
            <SideSubtitle>图层</SideSubtitle>
            <LayerTools>
              {LAYER_TOOLS.map(([name, art]) => (
                <GridButton key={name} aria-label={name}>
                  <Icon size={24}>{art}</Icon>
                </GridButton>
              ))}
            </LayerTools>
            <Field $top={5}>
              <svg width="14" height="14" aria-hidden="true">
                <circle cx="7" cy="5" r="4.300" fill="#f3cf3c" />
                <rect x="5" y="9" width="4" height="2" fill="#f3cf3c" />
                <rect x="5" y="11" width="4" height="2" fill="#b5b9c0" />
              </svg>
              <svg width="14" height="14" fill="none" aria-hidden="true">
                <rect x="2" y="6" width="8" height="6" fill={GOLD} />
                <path d="M5.500 5c-.5-3 5-3.500 5 0v2" stroke={GOLD} strokeWidth="1.500" />
              </svg>
              <svg width="14" height="14" stroke="#f0c636" strokeWidth="1.200" aria-hidden="true">
                <circle cx="7" cy="7" r="2.600" fill="#f0c636" />
                <path d="M7 0v3M7 11v3M0 7h3M11 7h3M2 2l2.500 2.500M12 2L9.500 4.500M2 12l2.500-2.500M12 12L9.500 9.500" />
              </svg>
              <svg width="12" height="12" aria-hidden="true">
                <rect x="1.500" y="1.500" width="9" height="9" rx="1" fill="#fff" stroke="#111" />
              </svg>
              <FieldSelect $indent={2} aria-label="当前图层">
                <option>0</option>
              </FieldSelect>
              <Chevron />
            </Field>
            <Field $top={7}>
              <FieldSelect aria-label="图层状态">
                <option>未保存的图层状态</option>
              </FieldSelect>
              <Chevron />
            </Field>
            <Disclosure>
              <Chevron dir="right" />
              显示图层列表
            </Disclosure>
          </LayerBody>
          <SideHeader>
            <SideTitle>特性</SideTitle>
            <button aria-label="折叠特性">
              <svg width="7" height="9" stroke="#dfe3ea">
                <path d="M0 5.500h7" />
              </svg>
            </button>
          </SideHeader>
          <PropertiesRow>
            特性
            <Segmented>
              <Segment $active>全部</Segment>
              <Segment>我的</Segment>
            </Segmented>
          </PropertiesRow>
        </SidePanel>
      </Workspace>
    </Window>
  );
}

export default App;
